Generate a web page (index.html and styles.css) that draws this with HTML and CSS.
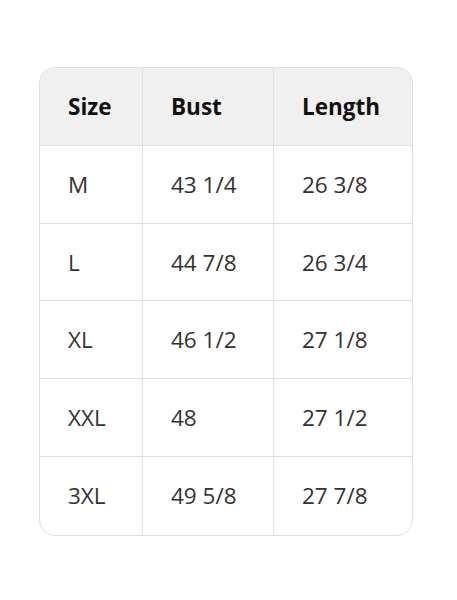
FILE: index.html
```html
<!DOCTYPE html>
<html>
<head>
<meta charset="utf-8">
<link rel="stylesheet" href="styles.css">
</head>
<body>
<div class="page">
  <div class="card">
    <table class="sizes">
      <thead>
        <tr><th class="c1">Size</th><th class="c2">Bust</th><th class="c3">Length</th></tr>
      </thead>
      <tbody>
        <tr><td>M</td><td>43 1/4</td><td>26 3/8</td></tr>
        <tr><td>L</td><td>44 7/8</td><td>26 3/4</td></tr>
        <tr><td>XL</td><td>46 1/2</td><td>27 1/8</td></tr>
        <tr><td>XXL</td><td>48</td><td>27 1/2</td></tr>
        <tr><td>3XL</td><td>49 5/8</td><td>27 7/8</td></tr>
      </tbody>
    </table>
  </div>
</div>
</body>
</html>
```

FILE: styles.css
```css
html, body {
  margin: 0;
  padding: 0;
  background: #ffffff;
}
.page {
  padding: 67px 0 0 39px;
}
.card {
  width: 372px;
  border: 1.5px solid #dcdfe6;
  border-radius: 16px;
  overflow: hidden;
}
.sizes {
  width: 100%;
  border-collapse: collapse;
  font-family: "Open Sans", "Noto Sans", sans-serif;
  font-size: 22.5px;
  table-layout: fixed;
}
.sizes th, .sizes td {
  text-align: left;
  padding: 0 0 0 28px;
  border-right: 1.5px solid #dcdfe6;
  border-bottom: 1.5px solid #dcdfe6;
  white-space: nowrap;
}
.sizes th:last-child, .sizes td:last-child {
  border-right: none;
}
.sizes tbody tr:last-child td {
  border-bottom: none;
  height: 78px;
}
.sizes th {
  height: 77px;
  background: #f0f0f1;
  color: #111111;
  font-weight: 700;
}
.sizes td {
  height: 76.7px;
  color: #333333;
  font-weight: 400;
}
.c1 { width: 74px; }
.c2 { width: 102px; }
.c3 { width: auto; }
```
